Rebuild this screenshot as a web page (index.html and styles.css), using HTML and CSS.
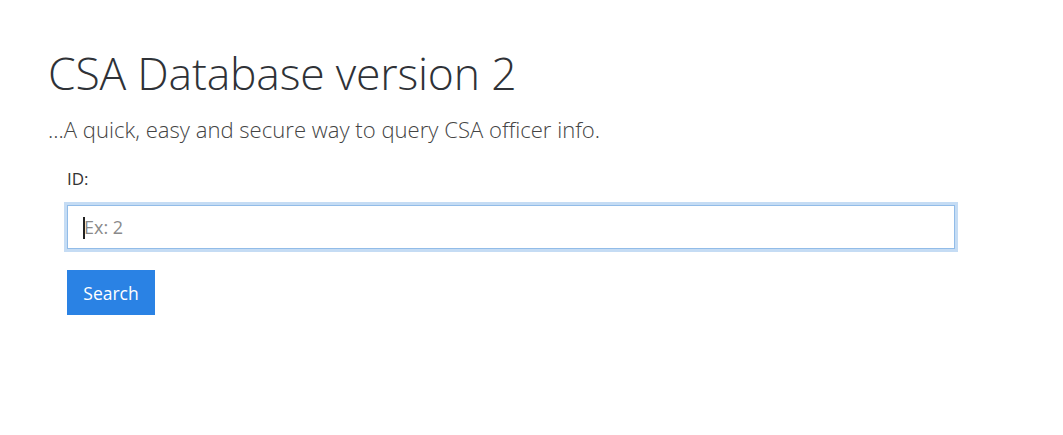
FILE: index.html
```html
<!DOCTYPE html>
<html>
<head>
<meta charset="utf-8">
<link rel="stylesheet" href="styles.css">
</head>
<body>
<div class="page">
  <h1 class="title">CSA Database version 2</h1>
  <p class="lead">...A quick, easy and secure way to query CSA officer info.</p>
  <form class="form">
    <label class="label" for="id">ID:</label>
    <div class="field"><span class="caret"></span><input id="id" class="input" type="text" placeholder="Ex: 2"></div>
    <button type="button" class="btn">Search</button>
  </form>
</div>
</body>
</html>
```
FILE: styles.css
```css
html, body {
  margin: 0;
  padding: 0;
  background: #fff;
}
body {
  font-family: "Open Sans", "Noto Sans", sans-serif;
  color: #333;
}
.page {
  padding: 42px 0 0 48px;
}
.title {
  margin: 0;
  font-weight: 300;
  font-size: 44.5px;
  line-height: 62px;
  color: #2f3237;
  letter-spacing: -0.2px;
}
.lead {
  margin: 10px 0 0;
  font-weight: 300;
  font-size: 22.1px;
  line-height: 30px;
  color: #444;
}
.form {
  display: flex;
  flex-direction: column;
  align-items: flex-start;
  padding-left: 19px;
  margin-top: 24px;
}
.label {
  font-size: 17px;
  line-height: 22px;
  color: #333;
}
.field {
  position: relative;
  margin-top: 15px;
  box-sizing: border-box;
  width: 888px;
  height: 44px;
  border: 1px solid #92bce8;
  box-shadow: 0 0 0 3px #c5dcf4;
  background: #fff;
}
.input {
  box-sizing: border-box;
  width: 100%;
  height: 100%;
  border: 0;
  outline: none;
  padding: 0 0 0 16px;
  font-family: "Open Sans", "Noto Sans", sans-serif;
  font-size: 18px;
  color: #555;
  background: transparent;
}
.input::placeholder {
  color: #8a8a8a;
}
.caret {
  position: absolute;
  left: 15px;
  top: 11px;
  width: 2px;
  height: 22px;
  background: #222;
}
.btn {
  margin-top: 21px;
  width: 88px;
  height: 45px;
  border: 0;
  border-radius: 0;
  background: #2a82e4;
  color: #fff;
  font-family: "Open Sans", "Noto Sans", sans-serif;
  font-size: 17.5px;
  padding: 0;
}
```
